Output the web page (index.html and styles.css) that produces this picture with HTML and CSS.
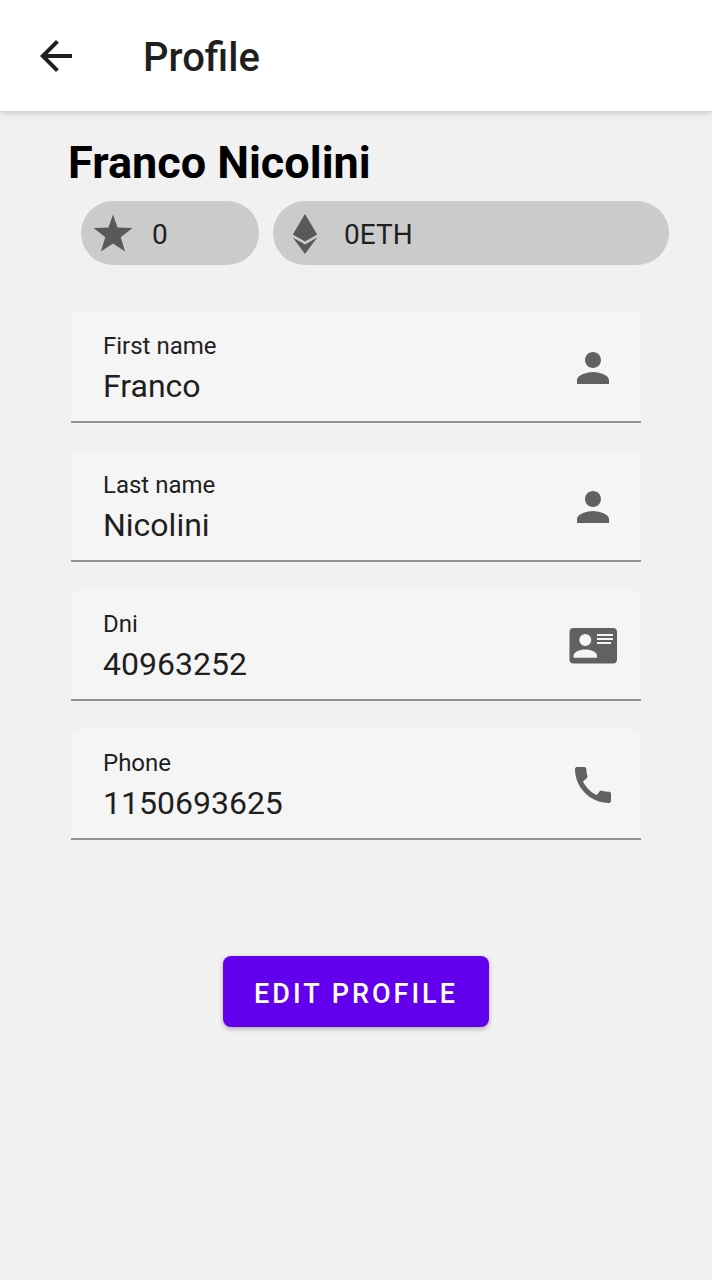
FILE: index.html
```html
<!DOCTYPE html>
<html lang="en">
<head>
<meta charset="utf-8">
<meta name="viewport" content="width=device-width, initial-scale=1">
<title>Profile</title>
<link rel="stylesheet" href="styles.css">
</head>
<body>
<header class="app-bar">
  <button class="back" type="button" aria-label="Back">
    <svg class="icon" viewBox="0 0 24 24"><path d="M20 11H7.83l5.59-5.59L12 4l-8 8 8 8 1.410-1.410L7.830 13H20v-2z"/></svg>
  </button>
  <h1 class="app-title">Profile</h1>
</header>
<main class="profile">
  <h2 class="name">Franco Nicolini</h2>
  <div class="chips">
    <div class="chip chip-score">
      <svg class="chip-icon" viewBox="0 0 40 40"><path d="M20 0.500l4.500 13 15 .5-11.800 9.200 4.400 14.300-12.100-8-12.100 8 4.400-14.300L.5 14l15-.5z"/></svg>
      <span>0</span>
    </div>
    <div class="chip chip-balance">
      <svg class="chip-icon" viewBox="0 0 40 40"><path d="M20 0l12.200 20.500L20 27.500 7.800 20.500zM7.800 23.500L20 30.500l12.200-7L20 40z"/></svg>
      <span>0ETH</span>
    </div>
  </div>
  <form class="form">
    <div class="field">
      <div class="field-text">
        <label class="label" for="first">First name</label>
        <input class="input" id="first" type="text" value="Franco" readonly>
      </div>
      <svg class="icon" viewBox="0 0 24 24"><path d="M12 12c2.210 0 4-1.790 4-4s-1.790-4-4-4-4 1.790-4 4 1.790 4 4 4zm0 2c-2.670 0-8 1.340-8 4v2h16v-2c0-2.660-5.330-4-8-4z"/></svg>
    </div>
    <div class="field">
      <div class="field-text">
        <label class="label" for="last">Last name</label>
        <input class="input" id="last" type="text" value="Nicolini" readonly>
      </div>
      <svg class="icon" viewBox="0 0 24 24"><path d="M12 12c2.210 0 4-1.790 4-4s-1.790-4-4-4-4 1.790-4 4 1.790 4 4 4zm0 2c-2.670 0-8 1.340-8 4v2h16v-2c0-2.660-5.330-4-8-4z"/></svg>
    </div>
    <div class="field">
      <div class="field-text">
        <label class="label" for="dni">Dni</label>
        <input class="input" id="dni" type="text" value="40963252" readonly>
      </div>
      <svg class="icon" viewBox="0 0 48 48"><path fill-rule="evenodd" d="M4.500 6h39.500a4 4 0 0 1 4 4v27.600a4 4 0 0 1-4 4h-39.500a4 4 0 0 1-4-4V10a4 4 0 0 1 4-4zM16.300 12a6 6 0 1 0 0 12 6 6 0 0 0 0-12zM4.500 35.800h23.600v-1.800c0-4-6-6.500-11.800-6.500S4.500 30 4.500 34zM28 12v2h16v-2zM28 16v2h16v-2zM28 20v2h14v-2z"/></svg>
    </div>
    <div class="field">
      <div class="field-text">
        <label class="label" for="phone">Phone</label>
        <input class="input" id="phone" type="tel" value="1150693625" readonly>
      </div>
      <svg class="icon" viewBox="0 0 24 24"><path d="M20.010 15.380c-1.230 0-2.420-.2-3.530-.56-.35-.12-.74-.03-1.010.24l-1.570 1.970c-2.830-1.350-5.480-3.900-6.890-6.830l1.950-1.660c.27-.28.35-.67.24-1.020-.37-1.110-.56-2.300-.56-3.530 0-.54-.45-.99-.99-.99H4.190C3.650 3 3 3.240 3 3.990 3 13.280 10.730 21 20.010 21c.71 0 .99-.63.99-1.180v-3.450c0-.54-.45-.99-.99-.99z"/></svg>
    </div>
    <button class="edit" type="button">EDIT PROFILE</button>
  </form>
</main>
</body>
</html>
```
FILE: styles.css
```css
* {
  box-sizing: border-box;
}

body {
  margin: 0;
  min-height: 100vh;
  background: #f1f1f1;
  color: #1f1f1f;
  font-family: Roboto, "Liberation Sans", sans-serif;
}

.app-bar {
  display: flex;
  align-items: center;
  gap: 63px;
  padding: 32px 32px 27px;
  background: #fff;
  box-shadow: 0 1px 7px rgba(0, 0, 0, 0.22);
}

.back {
  display: flex;
  margin: 0;
  padding: 0 0 4px;
  border: 0;
  background: none;
  color: #1f1f1f;
  cursor: pointer;
}

.icon {
  display: block;
  flex: none;
  width: 48px;
  height: 48px;
  fill: currentColor;
}

.app-title {
  margin: 0;
  font-size: 40px;
  font-weight: 500;
  line-height: 48px;
}

.profile {
  padding: 24px 43px 40px 68px;
}

.name {
  margin: 0 0 10px;
  color: #000;
  font-size: 45px;
  font-weight: 700;
  line-height: 56px;
}

.chips {
  display: flex;
  gap: 14px;
  margin-left: 13px;
}

.chip {
  display: flex;
  align-items: center;
  height: 64px;
  padding: 2px 12px 0;
  border-radius: 32px;
  background: #cbcbcb;
  font-size: 28px;
}

.chip-score {
  flex: 0 0 178px;
  gap: 19px;
}

.chip-balance {
  flex: 1;
  gap: 19px;
}

.chip-icon {
  flex: none;
  width: 40px;
  height: 40px;
  fill: #595959;
}

.form {
  display: flex;
  flex-direction: column;
  gap: 28px;
  margin: 47px 28px 0 3px;
}

.field {
  display: flex;
  align-items: center;
  height: 111px;
  padding: 2px 24px 0 32px;
  border-bottom: 2px solid #919191;
  border-radius: 8px 8px 0 0;
  background: #f5f5f5;
  color: #616161;
}

.field-text {
  display: flex;
  flex: 1;
  flex-direction: column;
  min-width: 0;
  padding-top: 2px;
  color: #1f1f1f;
}

.label {
  font-size: 24px;
  line-height: 28px;
}

.input {
  width: 100%;
  height: 40px;
  margin: 6px 0 0;
  padding: 0;
  border: 0;
  outline: 0;
  background: none;
  color: inherit;
  font: inherit;
  font-size: 32px;
}

.edit {
  align-self: center;
  height: 71px;
  margin-top: 88px;
  padding: 4px 31px 0;
  border: 0;
  border-radius: 8px;
  background: #6200ee;
  box-shadow: 0 2px 5px rgba(0, 0, 0, 0.28);
  color: #fff;
  font-family: inherit;
  font-size: 27px;
  font-weight: 500;
  letter-spacing: 3px;
  cursor: pointer;
}
```
